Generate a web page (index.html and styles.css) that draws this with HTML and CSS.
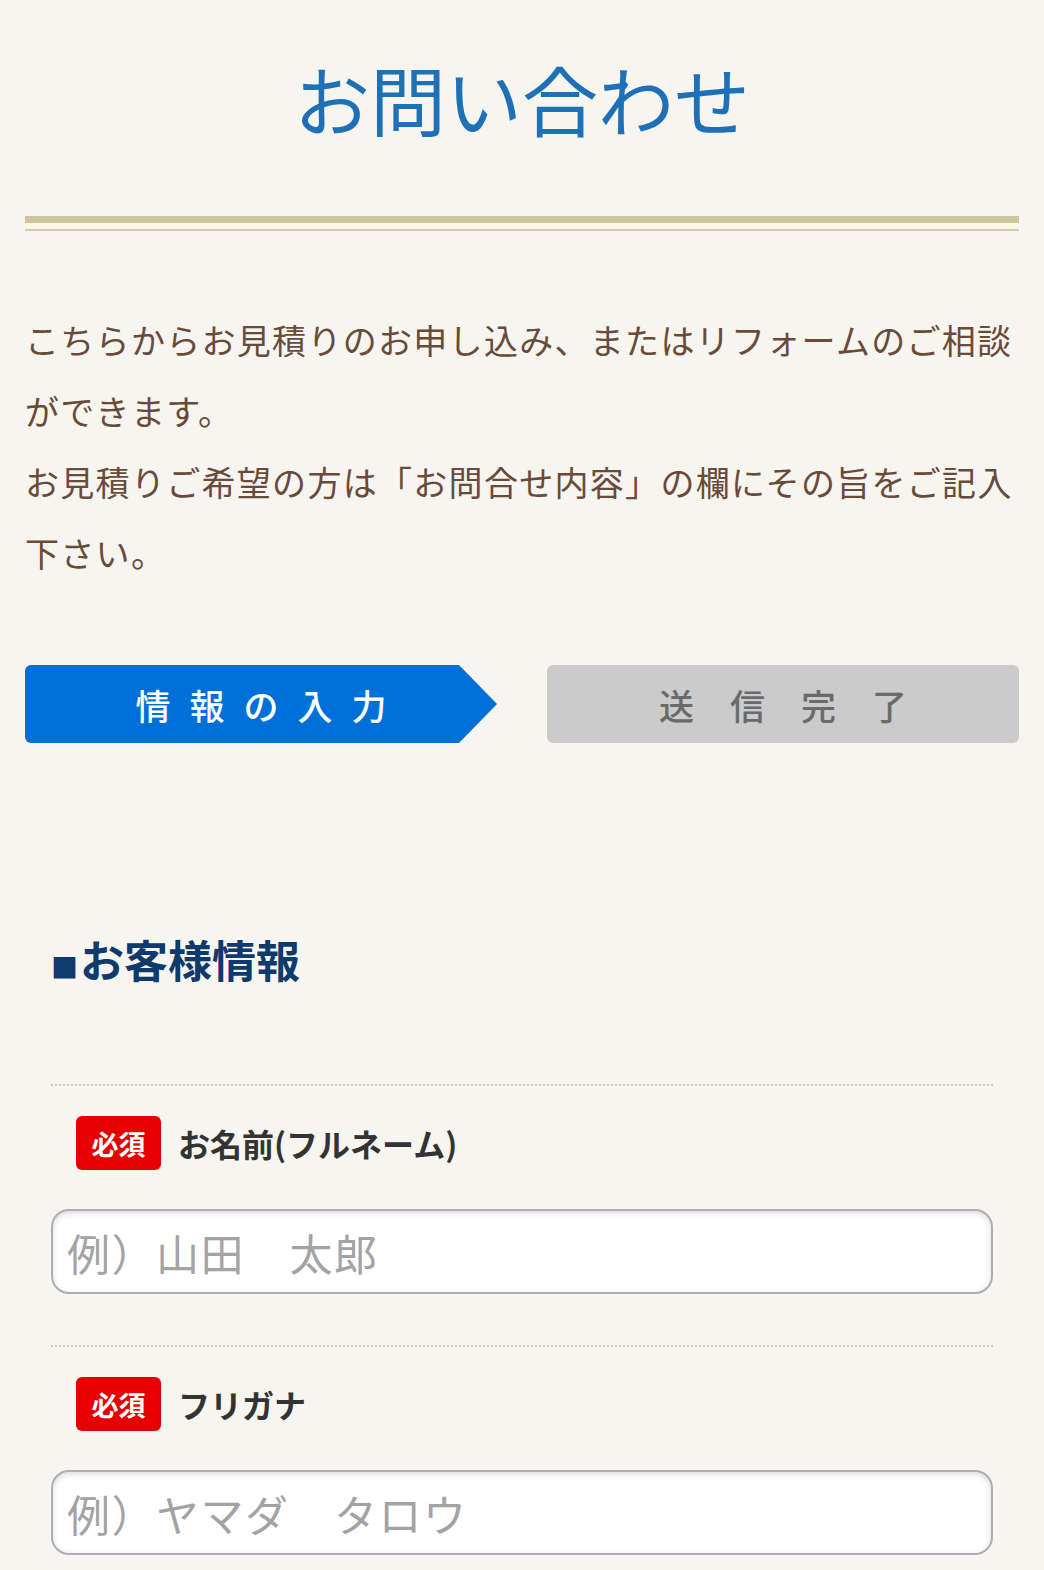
FILE: index.html
```html
<!DOCTYPE html>
<html lang="ja">
<head>
  <meta charset="UTF-8">
  <title>お問い合わせ</title>
  <link rel="stylesheet" href="styles.css">
</head>
<body>

  <div class="page">
    <h1 class="page-title">お問い合わせ</h1>
    <div class="title-rule"></div>

    <p class="lead">
      こちらからお見積りのお申し込み、またはリフォームのご相談ができます。<br>
      お見積りご希望の方は「お問合せ内容」の欄にその旨をご記入下さい。
    </p>

    <!-- STEPS -->
    <div class="steps">
      <div class="step step-current"><span>情報の入力</span></div>
      <div class="step step-next"><span>送信完了</span></div>
    </div>
  </div>

  <!-- FORM -->
  <section class="form-section">
    <h2 class="section-title"><span class="mark">■</span>お客様情報</h2>

    <div class="field">
      <div class="field-label">
        <span class="badge">必須</span>
        <label for="name">お名前(フルネーム)</label>
      </div>
      <input type="text" id="name" class="text-input" placeholder="例）山田　太郎">
    </div>

    <div class="field">
      <div class="field-label">
        <span class="badge">必須</span>
        <label for="kana">フリガナ</label>
      </div>
      <input type="text" id="kana" class="text-input" placeholder="例）ヤマダ　タロウ">
    </div>
  </section>

</body>
</html>
```

FILE: styles.css
```css
body {
  font-family: "Noto Sans CJK JP", "Noto Sans", sans-serif;
  background: #f6f5ef;
  margin: 0;
  padding: 0;
}

.page {
  padding: 0 25px;
}

.page-title {
  margin: 0;
  padding-top: 53px;
  font-size: 76px;
  line-height: 90px;
  font-weight: 400;
  color: #1f71b7;
  text-align: center;
}

.title-rule {
  margin-top: 73px;
  height: 6px;
  border-top: 7px solid #cec59f;
  border-bottom: 2px solid #d3cbae;
  background: #faf7e7;
}

.lead {
  margin: 73px 0 0;
  font-size: 34px;
  letter-spacing: 1.3px;
  line-height: 71px;
  color: #6a4a39;
}

.steps {
  display: grid;
  grid-template-columns: 1fr 1fr;
  gap: 50px;
  margin-top: 77px;
}

.step {
  height: 78px;
  display: flex;
  justify-content: center;
  align-items: center;
  font-size: 35px;
  font-weight: 500;
}

.step-current {
  background: #0070d8;
  color: white;
  border-radius: 6px 0 0 6px;
  clip-path: polygon(0 0, calc(100% - 38px) 0, 100% 50%, calc(100% - 38px) 100%, 0 100%);
  letter-spacing: 19px;
  padding-left: 19px;
}

.step-next {
  background: #cbcbcb;
  color: #6a6a6a;
  border-radius: 6px;
  letter-spacing: 36px;
  padding-left: 36px;
}

.form-section {
  padding: 0 51px;
}

.section-title {
  margin: 186px 0 0;
  font-size: 44px;
  line-height: 60px;
  font-weight: 700;
  color: #0f3a6c;
}

.section-title .mark {
  font-size: 27px;
  margin-right: 2px;
}

.field {
  border-top: 2px dotted #c9c9c9;
  padding: 30px 0 51px;
}

.section-title + .field {
  margin-top: 87px;
}

.field-label {
  display: flex;
  align-items: center;
  gap: 17px;
  padding-left: 25px;
}

.badge {
  width: 85px;
  height: 54px;
  display: flex;
  justify-content: center;
  align-items: center;
  background: #e60000;
  color: white;
  border-radius: 6px;
  font-size: 27px;
  font-weight: 700;
}

.field-label label {
  font-size: 32px;
  font-weight: 700;
  color: #333;
}

.text-input {
  display: block;
  box-sizing: border-box;
  width: 100%;
  height: 85px;
  margin-top: 39px;
  padding: 0 14px;
  border: 2px solid #adadb2;
  border-radius: 18px;
  background: white;
  box-shadow: inset 0 2px 6px rgba(0,0,0,0.15);
  font-family: inherit;
  font-size: 43px;
  letter-spacing: 1.5px;
  color: #333;
}

.text-input::placeholder {
  color: #a3a3a3;
}
```
